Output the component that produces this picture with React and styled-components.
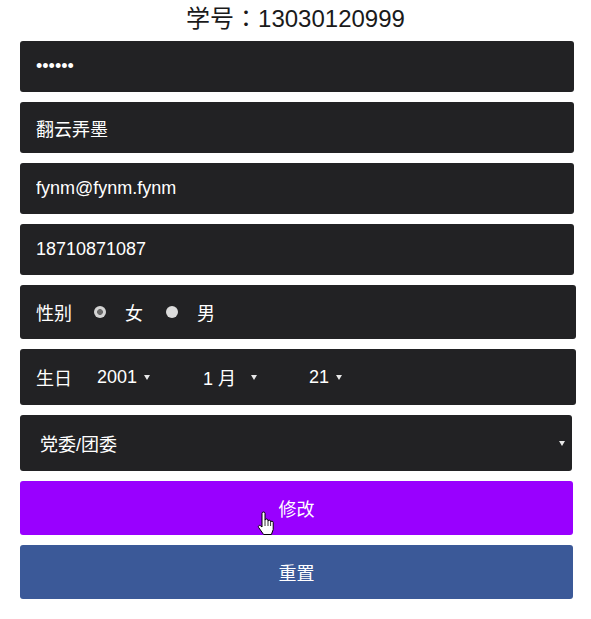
import React from "react";
import styled, { createGlobalStyle } from "styled-components";

const Global = createGlobalStyle`
  html, body { margin: 0; padding: 0; background: #ffffff; }
  body { font-family: "Liberation Sans", Arial, "Noto Sans CJK SC", sans-serif; }
  * { box-sizing: border-box; }
`;

const Page = styled.div`
  width: 591px;
  padding-bottom: 20px;
`;

const Title = styled.h1`
  margin: 0 0 7px 0;
  height: 34px;
  line-height: 34px;
  text-align: center;
  font-size: 24px;
  font-weight: normal;
  color: #1a1a1a;
`;

const Colon = styled.span`
  font-family: "Noto Sans CJK JP", "Noto Sans CJK TC", sans-serif;
`;

const Form = styled.form`
  margin-left: 20px;
  display: flex;
  flex-direction: column;
  align-items: flex-start;
  gap: 10px;
`;

const Field = styled.input`
  display: block;
  width: 554px;
  height: 51px;
  padding: 0 16px;
  border: none;
  border-radius: 3px;
  background: #222224;
  color: #ffffff;
  font-family: "Liberation Sans", Arial, "Noto Sans CJK SC", sans-serif;
  font-size: 18px;
  outline: none;
`;

const Row = styled.div`
  display: flex;
  align-items: center;
  width: 556px;
  height: ${(p) => p.$h}px;
  padding-left: 16px;
  border-radius: 3px;
  background: #222224;
  color: #ffffff;
  font-size: 18px;
`;

const Label = styled.span`
  font-family: "Liberation Sans", "Noto Sans CJK SC", sans-serif;
  margin-right: ${(p) => p.$mr}px;
`;

const Radio = styled.span`
  width: 12px;
  height: 12px;
  border-radius: 50%;
  margin-right: 19px;
  background: ${(p) =>
    p.$checked
      ? "radial-gradient(circle, #6a6a6a 0 2.6px, #d4d4d4 3.2px)"
      : "#dcdcdc"};
`;

const RadioText = styled.span`
  margin-right: ${(p) => p.$mr || 0}px;
`;

const DateSelect = styled.div`
  display: flex;
  align-items: center;
  gap: 7px;
  width: ${(p) => (p.$w ? `${p.$w}px` : "auto")};
`;

const DateValue = styled.span`
  min-width: ${(p) => p.$min || 0}px;
`;

const Caret = styled.span`
  width: 0;
  height: 0;
  border-left: 3px solid transparent;
  border-right: 3px solid transparent;
  border-top: 5px solid #e8e8e8;
`;

const SelectBox = styled.div`
  display: flex;
  align-items: center;
  justify-content: space-between;
  width: 552px;
  height: 56px;
  padding: 0 7px 0 20px;
  border-radius: 3px;
  background: #222224;
  color: #ffffff;
  font-size: 18px;
`;

const Button = styled.button`
  position: relative;
  width: 553px;
  height: 54px;
  border: none;
  border-radius: 3px;
  background: ${(p) => p.$bg};
  color: #ffffff;
  font-family: "Liberation Sans", "Noto Sans CJK SC", sans-serif;
  font-size: 18px;
  padding: 0;
`;

const Cursor = styled.svg`
  position: absolute;
  left: 237px;
  top: 30px;
  width: 20px;
  height: 27px;
`;

function HandCursor() {
  return (
    <Cursor viewBox="0 0 20 27">
      <path
        d="M5 2.5 a1.5 1.5 0 0 1 3 0 V9.5 a1.5 1.5 0 0 1 3 0 v1 a1.3 1.3 0 0 1 2.6 0 v1 a1.3 1.3 0 0 1 2.6 0 V18.5 l-1.8 5 H6.6 L1.7 16.6 a1.3 1.3 0 0 1 1.9 -1.8 L5 16 Z"
        fill="#ffffff"
        stroke="#000000"
        strokeWidth="1"
        strokeLinejoin="round"
      />
      <path d="M8 10 V15 M11 11 V15 M13.6 12 V15" stroke="#000" strokeWidth="0.8" fill="none" />
    </Cursor>
  );
}

export default function App() {
  return (
    <Page>
      <Global />
      <Title>
        学号<Colon>：</Colon>13030120999
      </Title>
      <Form onSubmit={(e) => e.preventDefault()}>
        <Field type="password" defaultValue="123456" readOnly />
        <Field type="text" defaultValue="翻云弄墨" readOnly />
        <Field type="text" defaultValue="fynm@fynm.fynm" readOnly />
        <Field type="text" defaultValue="18710871087" readOnly />
        <Row $h={54}>
          <Label $mr={22}>性别</Label>
          <Radio $checked />
          <RadioText $mr={23}>女</RadioText>
          <Radio />
          <RadioText>男</RadioText>
        </Row>
        <Row $h={56}>
          <Label $mr={25}>生日</Label>
          <DateSelect $w={106}>
            <DateValue $min={40}>2001</DateValue>
            <Caret />
          </DateSelect>
          <DateSelect $w={106}>
            <DateValue $min={41}>1 月</DateValue>
            <Caret />
          </DateSelect>
          <DateSelect>
            <DateValue>21</DateValue>
            <Caret />
          </DateSelect>
        </Row>
        <SelectBox>
          <span>党委/团委</span>
          <Caret />
        </SelectBox>
        <Button type="button" $bg="#9900ff">
          修改
          <HandCursor />
        </Button>
        <Button type="button" $bg="#3b5998">
          重置
        </Button>
      </Form>
    </Page>
  );
}
